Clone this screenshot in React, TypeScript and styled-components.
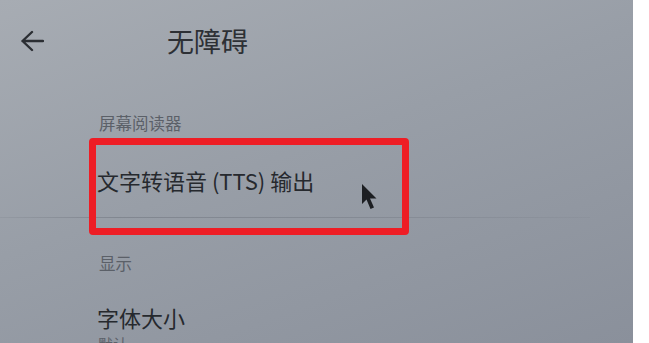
import React from "react";
import styled, { createGlobalStyle } from "styled-components";

const GlobalStyle = createGlobalStyle`
  html, body {
    margin: 0;
    padding: 0;
    background: #ffffff;
  }
  body {
    font-family: "Noto Sans CJK SC", "Noto Sans", sans-serif;
  }
`;

const Page = styled.div`
  display: flex;
  width: 649px;
  height: 343px;
  overflow: hidden;
  background: #ffffff;
`;

const Screen = styled.div`
  position: relative;
  width: 633px;
  height: 343px;
  flex-shrink: 0;
  overflow: hidden;
  background: linear-gradient(160deg, #a7acb3 0%, #989ea7 45%, #8a909b 100%);
`;

const Header = styled.header`
  display: flex;
  align-items: center;
  height: 82px;
  padding-left: 19px;
`;

const BackButton = styled.button`
  display: flex;
  align-items: center;
  justify-content: center;
  width: 26px;
  height: 26px;
  padding: 0;
  border: none;
  background: none;
  color: #2b2e33;
`;

const Title = styled.h1`
  margin: 0 0 0 122px;
  font-size: 27px;
  font-weight: 400;
  line-height: 34px;
  color: #2d3035;
`;

const SectionLabel = styled.div<{ $gap: number }>`
  margin-top: ${(p) => p.$gap}px;
  padding-left: 99px;
  font-size: 16.5px;
  line-height: 22px;
  color: #5b6068;
`;

const ItemRow = styled.div<{ $top: number }>`
  padding-left: 97px;
  padding-top: ${(p) => p.$top}px;
  font-size: 22px;
  line-height: 28px;
  color: #26292e;
`;

const FirstItem = styled(ItemRow)`
  height: 51px;
`;

const Subtitle = styled.div`
  padding-left: 98px;
  margin-top: 3px;
  font-size: 15px;
  line-height: 20px;
  color: #5b6068;
`;

const Divider = styled.div`
  width: 590px;
  height: 1px;
  background: linear-gradient(
    to right,
    rgba(95, 100, 110, 0.12) 0%,
    rgba(95, 100, 110, 0.4) 20%,
    rgba(95, 100, 110, 0.3) 60%,
    rgba(95, 100, 110, 0.08) 100%
  );
`;

const Highlight = styled.div`
  position: absolute;
  left: 89px;
  top: 138px;
  width: 320px;
  height: 97px;
  box-sizing: border-box;
  border: 7px solid #ee1d25;
  border-radius: 4px;
  pointer-events: none;
`;

const Pointer = styled.svg`
  position: absolute;
  left: 361px;
  top: 183px;
  filter: blur(0.4px);
`;

export default function App() {
  return (
    <>
      <GlobalStyle />
      <Page>
        <Screen>
          <Header>
            <BackButton aria-label="返回">
              <svg width="24" height="22" viewBox="0 0 24 22" fill="none">
                <path
                  d="M12 2 L2.5 11 L12 20 M2.5 11 H23"
                  stroke="currentColor"
                  strokeWidth="2.4"
                  strokeLinecap="round"
                  strokeLinejoin="round"
                />
              </svg>
            </BackButton>
            <Title>无障碍</Title>
          </Header>

          <SectionLabel $gap={30}>屏幕阅读器</SectionLabel>
          <FirstItem $top={32}>文字转语音 (TTS) 输出</FirstItem>
          <Divider />

          <SectionLabel $gap={34}>显示</SectionLabel>
          <ItemRow $top={29}>字体大小</ItemRow>
          <Subtitle>默认</Subtitle>

          <Highlight />
          <Pointer width="18" height="28" viewBox="0 0 18 28">
            <path
              d="M1 1 L1 21 L5.5 16.5 L9.5 26 L13 24.5 L9 15.5 L15.5 15.5 Z"
              fill="#1d1f23"
            />
          </Pointer>
        </Screen>
      </Page>
    </>
  );
}
